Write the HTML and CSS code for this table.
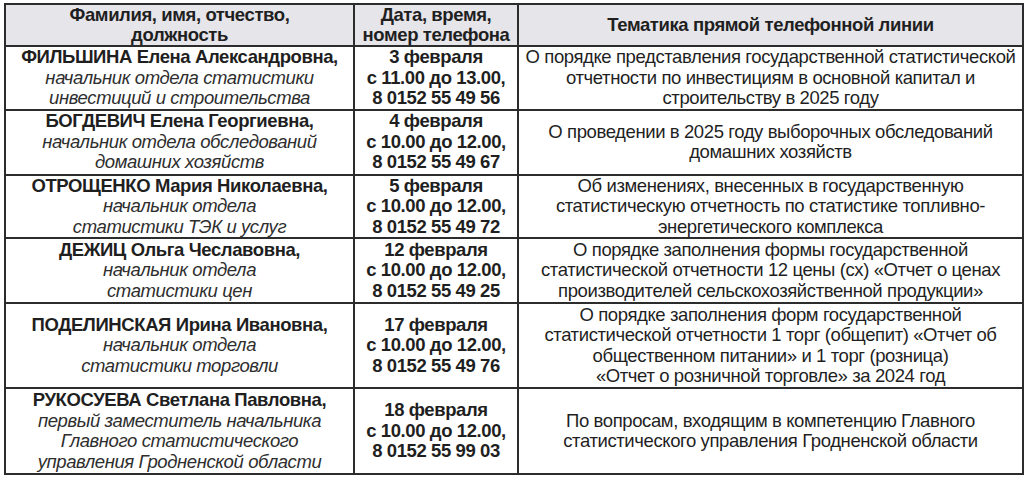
FILE: index.html
```html
<!DOCTYPE html>
<html lang="ru">
<head>
<meta charset="utf-8">
<link rel="stylesheet" href="styles.css">
</head>
<body>
<table class="hotline">
  <colgroup>
    <col class="c-name">
    <col class="c-date">
    <col class="c-topic">
  </colgroup>
  <thead>
    <tr class="r-head">
      <th>Фамилия, имя, отчество,<br>должность</th>
      <th>Дата, время,<br>номер телефона</th>
      <th>Тематика прямой телефонной линии</th>
    </tr>
  </thead>
  <tbody>
    <tr class="r-64">
      <td class="name"><b>ФИЛЬШИНА Елена Александровна,</b><br><i>начальник отдела статистики<br>инвестиций и строительства</i></td>
      <td class="date">3 февраля<br>с 11.00 до 13.00,<br>8 0152 55 49 56</td>
      <td class="topic">О порядке представления государственной статистической<br>отчетности по инвестициям в основной капитал и<br>строительству в 2025 году</td>
    </tr>
    <tr class="r-66">
      <td class="name"><b>БОГДЕВИЧ Елена Георгиевна,</b><br><i>начальник отдела обследований<br>домашних хозяйств</i></td>
      <td class="date">4 февраля<br>с 10.00 до 12.00,<br>8 0152 55 49 67</td>
      <td class="topic">О проведении в 2025 году выборочных обследований<br>домашних хозяйств</td>
    </tr>
    <tr class="r-64">
      <td class="name"><b>ОТРОЩЕНКО Мария Николаевна,</b><br><i>начальник отдела<br>статистики ТЭК и услуг</i></td>
      <td class="date">5 февраля<br>с 10.00 до 12.00,<br>8 0152 55 49 72</td>
      <td class="topic">Об изменениях, внесенных в государственную<br>статистическую отчетность по статистике топливно-<br>энергетического комплекса</td>
    </tr>
    <tr class="r-66">
      <td class="name"><b>ДЕЖИЦ Ольга Чеславовна,</b><br><i>начальник отдела<br>статистики цен</i></td>
      <td class="date">12 февраля<br>с 10.00 до 12.00,<br>8 0152 55 49 25</td>
      <td class="topic">О порядке заполнения формы государственной<br>статистической отчетности 12 цены (сх) «Отчет о ценах<br>производителей сельскохозяйственной продукции»</td>
    </tr>
    <tr class="r-86">
      <td class="name"><b>ПОДЕЛИНСКАЯ Ирина Ивановна,</b><br><i>начальник отдела<br>статистики торговли</i></td>
      <td class="date">17 февраля<br>с 10.00 до 12.00,<br>8 0152 55 49 76</td>
      <td class="topic">О порядке заполнения форм государственной<br>статистической отчетности 1 торг (общепит) «Отчет об<br>общественном питании» и 1 торг (розница)<br>«Отчет о розничной торговле» за 2024 год</td>
    </tr>
    <tr class="r-87">
      <td class="name"><b>РУКОСУЕВА Светлана Павловна,</b><br><i>первый заместитель начальника<br>Главного статистического<br>управления Гродненской области</i></td>
      <td class="date">18 февраля<br>с 10.00 до 12.00,<br>8 0152 55 99 03</td>
      <td class="topic">По вопросам, входящим в компетенцию Главного<br>статистического управления Гродненской области</td>
    </tr>
  </tbody>
</table>
</body>
</html>
```

FILE: styles.css
```css
html, body {
  margin: 0;
  padding: 0;
  background: #ffffff;
}
body {
  padding: 3px 1px 0 4px;
  font-family: "Liberation Sans", Arial, sans-serif;
  color: #1f1f1f;
}
.hotline {
  border-collapse: collapse;
  table-layout: fixed;
  width: 1018px;
  font-size: 18.5px;
  line-height: 20.5px;
  letter-spacing: -0.4px;
}
.c-name { width: 349px; }
.c-date { width: 164px; }
.c-topic { width: 505px; }
.hotline th,
.hotline td {
  border: 2px solid #2c2c2c;
  padding: 0 1px;
  text-align: center;
  vertical-align: middle;
  white-space: nowrap;
}
.hotline th {
  background: #e6e5ea;
  font-weight: bold;
  line-height: 20px;
}
.r-head th { height: 37px; }
.r-64 td { height: 61px; }
.r-66 td { height: 63px; }
.r-86 td { height: 83px; }
.r-87 td { height: 84px; }
.name b { font-weight: bold; }
.name i { font-style: italic; color: #2e2e2e; }
.date { font-weight: bold; }
.topic { font-weight: normal; }
```
